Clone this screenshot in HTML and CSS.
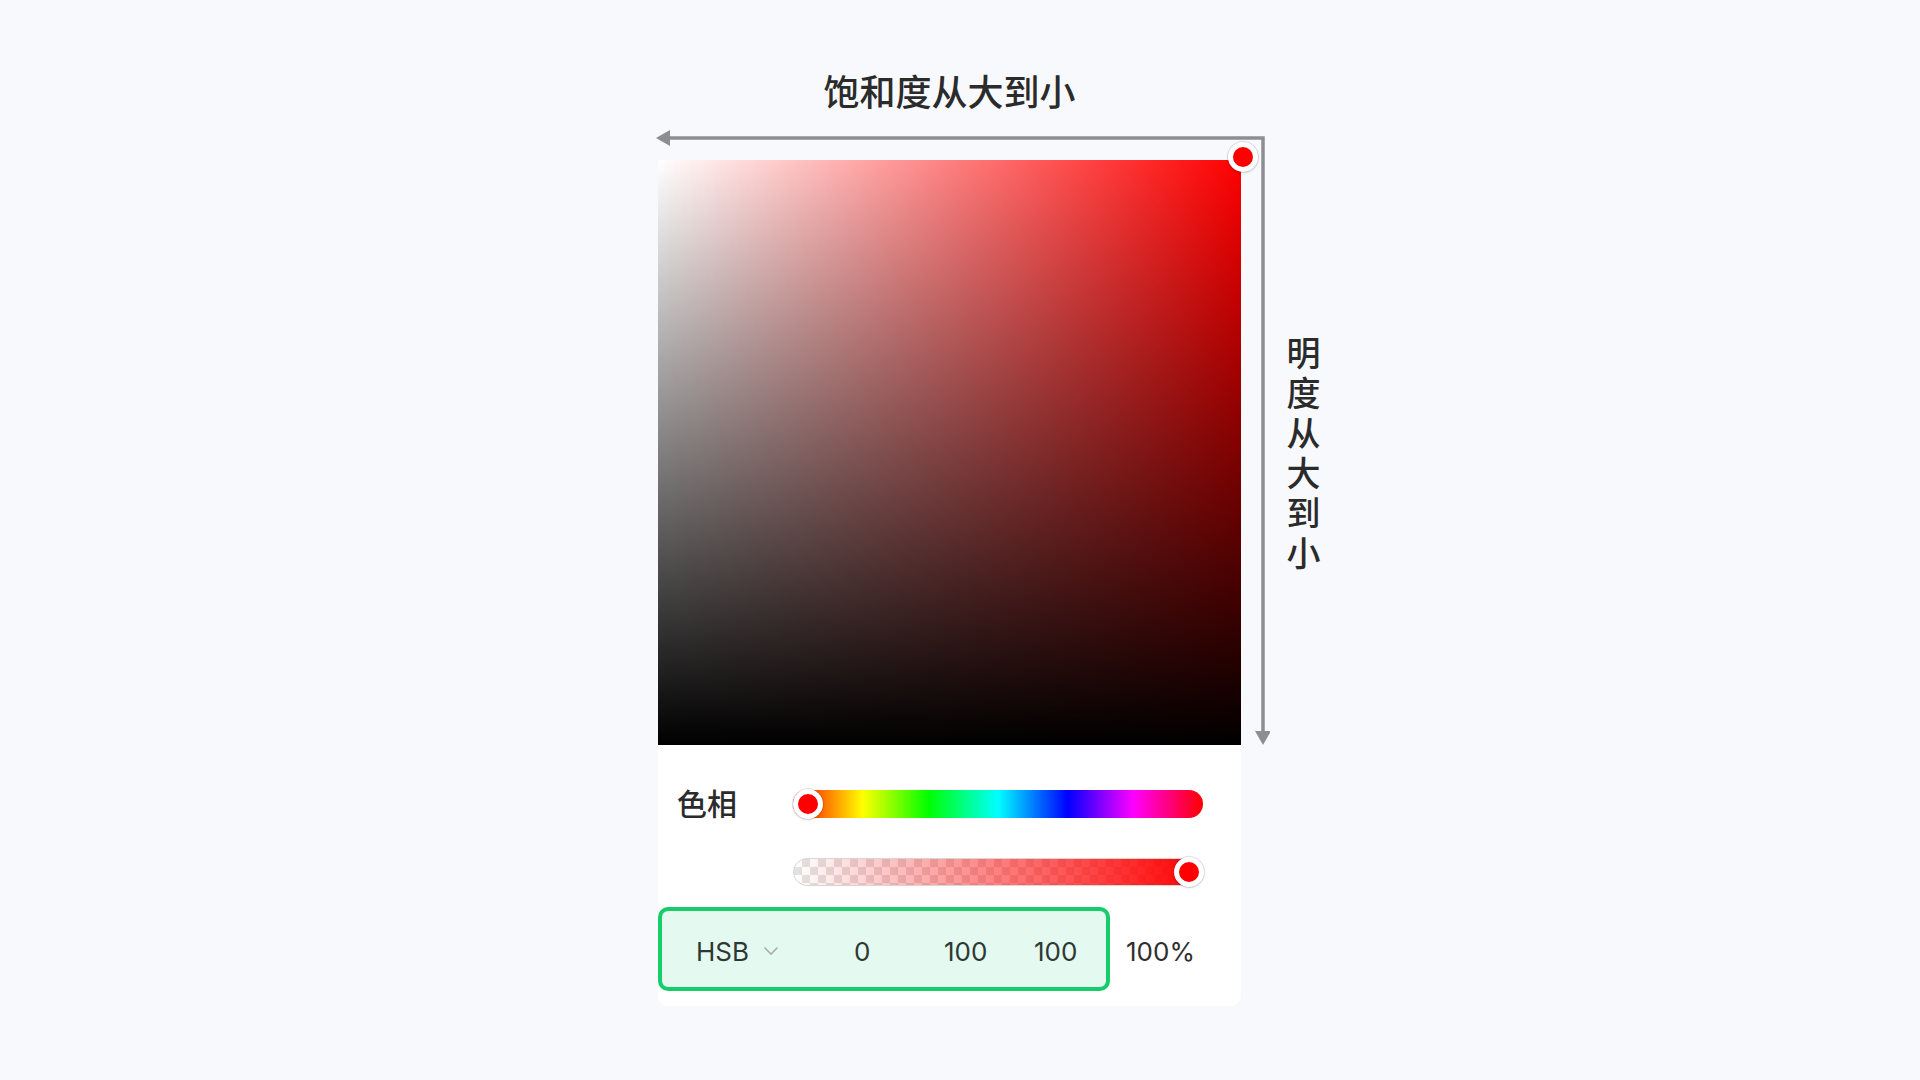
FILE: index.html
```html
<!DOCTYPE html>
<html lang="zh-CN">
<head>
  <meta charset="UTF-8" />
  <meta name="viewport" content="width=device-width, initial-scale=1.0"/>
  <title>HSB 颜色选择器</title>
  <link rel="stylesheet" href="styles.css">
</head>
<body>
  <div class="stage">
    <h1 class="title">饱和度从大到小</h1>

    <div class="board">
      <!-- saturation / brightness axes -->
      <svg class="axes" width="620" height="640" viewBox="0 0 620 640">
        <path d="M18 24 H613 V618" fill="none" stroke="#8e8e92" stroke-width="3.5"/>
        <polygon points="6,24 20,16 20,32" fill="#8e8e92"/>
        <polygon points="613,631 605,617 621,617" fill="#8e8e92"/>
      </svg>

      <div class="canvas-row">
        <div class="sv-square">
          <span class="handle square-handle"></span>
        </div>
        <div class="v-label">明度从大到小</div>
      </div>

      <div class="panel">
        <div class="slider-row">
          <span class="slider-label">色相</span>
          <div class="track hue-track">
            <span class="handle" style="left: 0px"></span>
          </div>
        </div>

        <div class="slider-row alpha-row">
          <div class="track alpha-track">
            <span class="handle" style="left: 380px"></span>
          </div>
        </div>

        <div class="value-row">
          <div class="value-box">
            <div class="mode">
              <span>HSB</span>
              <svg width="16" height="10" viewBox="0 0 16 10">
                <polyline points="1.5,1.5 8,8 14.5,1.5" fill="none" stroke="#a9aeab" stroke-width="1.6"/>
              </svg>
            </div>
            <span class="num">0</span>
            <span class="num">100</span>
            <span class="num last">100</span>
          </div>
          <span class="alpha-value">100%</span>
        </div>
      </div>
    </div>
  </div>
</body>
</html>
```

FILE: styles.css
```css
* {
  box-sizing: border-box;
  margin: 0;
  padding: 0;
}

body {
  background: #f8f9fc;
  color: #2f2f2f;
  font-family: Inter, "Noto Sans CJK SC", sans-serif;
  height: 100vh;
  overflow: hidden;
}

.stage {
  margin-left: 658px;
  padding-top: 68px;
  width: 583px;
}

.title {
  font-family: "Noto Sans CJK SC", sans-serif;
  font-size: 36px;
  font-weight: 500;
  line-height: 44px;
  text-align: center;
  color: #2b2b2b;
}

.board {
  position: relative;
  margin-top: 2px;
  padding-top: 46px;
}

.axes {
  position: absolute;
  left: -8px;
  top: 0;
}

.canvas-row {
  display: flex;
  align-items: center;
}

.sv-square {
  position: relative;
  flex-shrink: 0;
  width: 583px;
  height: 585px;
  background:
    linear-gradient(to top, #000, rgba(0, 0, 0, 0)),
    linear-gradient(to right, #fff, rgba(255, 255, 255, 0)),
    #ff0000;
}

.v-label {
  margin-left: 45px;
  margin-top: 6px;
  writing-mode: vertical-rl;
  font-family: "Noto Sans CJK SC", sans-serif;
  font-size: 34px;
  font-weight: 500;
  line-height: 34px;
  letter-spacing: 6px;
  color: #2b2b2b;
}

/* shared thumb for square and sliders */
.handle {
  position: absolute;
  top: -1px;
  width: 30px;
  height: 30px;
  border-radius: 50%;
  background: #ff0000;
  border: 5px solid #fff;
  box-shadow: 0 0 0 1px rgba(0, 0, 0, 0.1), 0 1px 3px rgba(0, 0, 0, 0.12);
}

.square-handle {
  top: -18px;
  right: -17px;
}

.panel {
  width: 583px;
  background: #fff;
  border-radius: 0 0 10px 10px;
  padding: 45px 0 15px 0;
}

.slider-row {
  display: flex;
  align-items: center;
  padding-left: 19px;
}

.slider-label {
  width: 116px;
  margin-top: -4px;
  font-family: "Noto Sans CJK SC", sans-serif;
  font-size: 30px;
  font-weight: 500;
  line-height: 28px;
  color: #2b2b2b;
}

.track {
  position: relative;
  width: 410px;
  height: 28px;
  border-radius: 14px;
}

.hue-track {
  background: linear-gradient(to right,
    #ff0000 0%, #ffff00 17%, #00ff00 33%, #00ffff 50%,
    #0000ff 67%, #ff00ff 83%, #ff0000 100%);
}

.alpha-row {
  margin-top: 40px;
  padding-left: 135px;
}

.alpha-track {
  border: 1px solid #d6d6d6;
  background:
    linear-gradient(to right, rgba(255, 0, 0, 0), #ff0000),
    conic-gradient(#e3e3e3 25%, #fff 0 50%, #e3e3e3 0 75%, #fff 0) 0 0 / 16px 16px;
}

.alpha-track .handle {
  top: -2px;
}

.value-row {
  display: flex;
  align-items: center;
  margin-top: 21px;
}

.value-box {
  display: flex;
  align-items: center;
  width: 452px;
  height: 84px;
  padding: 4px 0 0 34px;
  border: 4px solid #17cc6b;
  border-radius: 10px;
  background: #e4f9ef;
  font-size: 26px;
  color: #2e3833;
}

.mode {
  display: flex;
  align-items: center;
  gap: 14px;
  width: 158px;
}

.num {
  width: 90px;
}

.num.last {
  width: auto;
}

.alpha-value {
  margin-left: 16px;
  padding-top: 4px;
  font-size: 26px;
  color: #2f2f2f;
}
```
